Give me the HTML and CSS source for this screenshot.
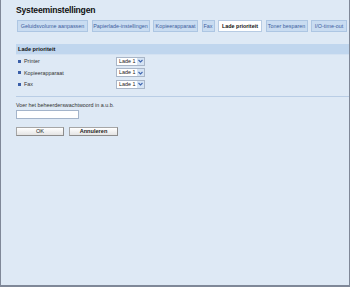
FILE: index.html
```html
<!DOCTYPE html>
<html>
<head>
<meta charset="utf-8">
<link rel="stylesheet" href="styles.css">
</head>
<body>
<div class="frame">
  <h1 class="title">Systeeminstellingen</h1>
  <div class="tabs">
    <span class="tab" style="width:71px">Geluidsvolume aanpassen</span>
    <span class="tab" style="width:58px">Papierlade-instellingen</span>
    <span class="tab" style="width:45px">Kopieerapparaat</span>
    <span class="tab" style="width:13px">Fax</span>
    <span class="tab active" style="width:44px">Lade prioriteit</span>
    <span class="tab" style="width:42px">Toner besparen</span>
    <span class="tab" style="width:36px">I/O-time-out</span>
    <span class="tab" style="width:30px">&nbsp;</span>
  </div>
  <div class="section-head">Lade prioriteit</div>
  <div class="rows">
    <div class="row"><span class="bullet"></span><span class="label">Printer</span><span class="select"><span class="sel-text">Lade 1</span><span class="sel-btn"><svg width="5" height="4" viewBox="0 0 5 4"><path d="M0.5 1 L2.5 3 L4.5 1" fill="none" stroke="#3f66b0" stroke-width="1.1"/></svg></span></span></div>
    <div class="row"><span class="bullet"></span><span class="label">Kopieerapparaat</span><span class="select"><span class="sel-text">Lade 1</span><span class="sel-btn"><svg width="5" height="4" viewBox="0 0 5 4"><path d="M0.5 1 L2.5 3 L4.5 1" fill="none" stroke="#3f66b0" stroke-width="1.1"/></svg></span></span></div>
    <div class="row"><span class="bullet"></span><span class="label">Fax</span><span class="select"><span class="sel-text">Lade 1</span><span class="sel-btn"><svg width="5" height="4" viewBox="0 0 5 4"><path d="M0.5 1 L2.5 3 L4.5 1" fill="none" stroke="#3f66b0" stroke-width="1.1"/></svg></span></span></div>
  </div>
  <div class="separator"></div>
  <div class="pw-label">Voer het beheerderswachtwoord in a.u.b.</div>
  <div class="pw-input"></div>
  <div class="buttons">
    <span class="btn btn-ok">OK</span>
    <span class="btn btn-cancel">Annuleren</span>
  </div>
</div>
</body>
</html>
```
FILE: styles.css
```css
html, body {
  margin: 0;
  padding: 0;
}
body {
  font-family: "Liberation Sans", Arial, sans-serif;
  background: #dde9f5;
}
.frame {
  width: 350px;
  height: 287px;
  box-sizing: border-box;
  border-left: 1px solid #7f8898;
  border-right: 1px solid #7f8898;
  border-bottom: 2px solid #7f8898;
  background: #dee9f5;
  padding: 4px 0 0 15px;
  overflow: hidden;
}
.title {
  margin: 0;
  font-size: 8.6px;
  font-weight: bold;
  letter-spacing: -0.2px;
  line-height: 12px;
  height: 12px;
  color: #111;
}
.tabs {
  display: flex;
  gap: 3.5px;
  margin: 4px 0 0 1px;
  height: 12px;
  white-space: nowrap;
}
.tab {
  flex: none;
  box-sizing: border-box;
  height: 12px;
  line-height: 11px;
  text-align: center;
  font-size: 5.4px;
  color: #3d5e9e;
  background: #c9dcf1;
  border: 1px solid #adc6e3;
  overflow: hidden;
}
.tab.active {
  background: #ffffff;
  color: #111;
  font-weight: bold;
  border-color: #b7cbe3;
}
.section-head {
  margin-top: 12px;
  height: 10px;
  line-height: 10px;
  padding-left: 2px;
  background: #c0d6ee;
  border-bottom: 1px solid #d4e2f2;
  font-size: 5.6px;
  font-weight: bold;
  color: #111;
}
.rows {
  padding-top: 0.5px;
}
.row {
  display: flex;
  align-items: center;
  height: 11.6px;
  padding-left: 2px;
}
.bullet {
  width: 3px;
  height: 3px;
  background: #3a5ea8;
  margin-right: 3px;
}
.label {
  width: 92px;
  font-size: 5.4px;
  color: #333;
}
.select {
  display: flex;
  box-sizing: border-box;
  width: 29px;
  height: 9px;
  background: #fff;
  border: 1px solid #a9b6c8;
}
.sel-text {
  flex: 1;
  font-size: 5.4px;
  line-height: 7px;
  padding-left: 2px;
  color: #222;
}
.sel-btn {
  width: 7px;
  display: flex;
  align-items: center;
  justify-content: center;
  background: #d6e4f4;
}
.separator {
  margin-top: 6px;
  height: 1px;
  background: #b9cde5;
}
.pw-label {
  margin-top: 5px;
  font-size: 5.4px;
  line-height: 7px;
  color: #333;
}
.pw-input {
  margin-top: 1px;
  box-sizing: border-box;
  width: 63px;
  height: 9px;
  background: #fff;
  border: 1px solid #a4b4ca;
}
.buttons {
  display: flex;
  gap: 5px;
  margin-top: 8px;
}
.btn {
  box-sizing: border-box;
  height: 9px;
  line-height: 7px;
  text-align: center;
  font-size: 5.6px;
  font-weight: bold;
  color: #222;
  background: linear-gradient(#ffffff, #e4e4e4);
  border: 1px solid #a6a6a6;
  border-right-color: #8c8c8c;
  border-bottom-color: #8c8c8c;
}
.btn-ok {
  width: 48px;
  font-weight: normal;
}
.btn-cancel {
  width: 49px;
}
```
